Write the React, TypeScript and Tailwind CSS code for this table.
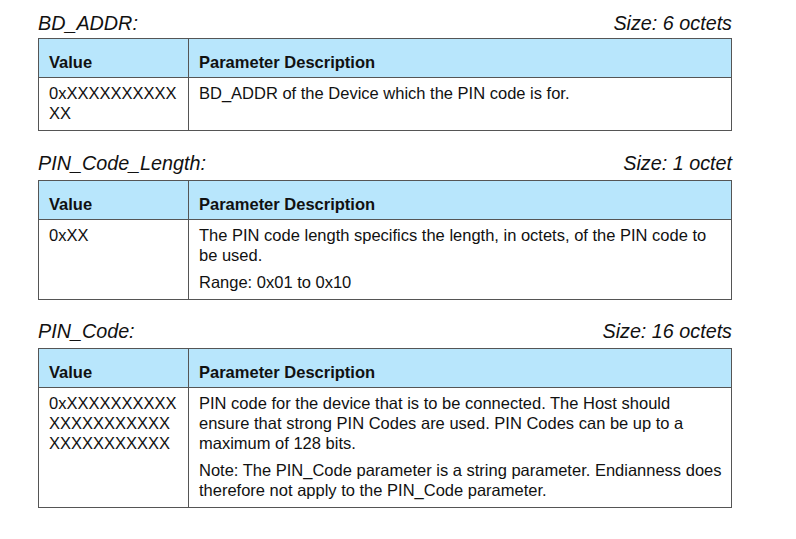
import React from "react";

const font = { fontFamily: '"Liberation Sans", Arial, sans-serif' };

function Section({
  name,
  size,
  value,
  desc,
  titleClass,
}: {
  name: string;
  size: string;
  value: string[];
  desc: string[][];
  titleClass: string;
}) {
  return (
    <div>
      <div className={`flex justify-between items-end italic text-[19.75px] leading-[24px] text-[#111] ${titleClass}`}>
        <span>{name}</span>
        <span>{size}</span>
      </div>
      <div className="border border-[#555] text-[16.5px] leading-[20px] text-[#111]">
        <div className="flex h-[39px] bg-[#b8e6fc] border-b border-[#555] font-bold">
          <div className="w-[150px] shrink-0 border-r border-[#555] pl-[10px] pt-[13px]">Value</div>
          <div className="flex-1 pl-[10px] pt-[13px]">Parameter Description</div>
        </div>
        <div className="flex">
          <div className="w-[150px] shrink-0 border-r border-[#555] pl-[10px] pt-[5px] pb-[7px]">
            {value.map((v, i) => (
              <div key={i}>{v}</div>
            ))}
          </div>
          <div className="flex-1 pl-[10px] pr-[6px] pt-[5px] pb-[7px] flex flex-col gap-[7px]">
            {desc.map((p, i) => (
              <div key={i}>
                {p.map((l, j) => (
                  <div key={j} className="whitespace-nowrap">{l}</div>
                ))}
              </div>
            ))}
          </div>
        </div>
      </div>
    </div>
  );
}

export default function App() {
  return (
    <div className="w-[796px] h-[539px] bg-white" style={font}>
      <div className="ml-[38px] w-[694px] pt-[5px] flex flex-col">
        <Section
          name="BD_ADDR:"
          size="Size: 6 octets"
          titleClass="h-[33px] pb-[3px]"
          value={["0xXXXXXXXXXX", "XX"]}
          desc={[["BD_ADDR of the Device which the PIN code is for."]]}
        />
        <Section
          name="PIN_Code_Length:"
          size="Size: 1 octet"
          titleClass="h-[49px] pb-[5px]"
          value={["0xXX"]}
          desc={[
            ["The PIN code length specifics the length, in octets, of the PIN code to", "be used."],
            ["Range: 0x01 to 0x10"],
          ]}
        />
        <Section
          name="PIN_Code:"
          size="Size: 16 octets"
          titleClass="h-[48px] pb-[5px]"
          value={["0xXXXXXXXXXX", "XXXXXXXXXXX", "XXXXXXXXXXX"]}
          desc={[
            [
              "PIN code for the device that is to be connected. The Host should",
              "ensure that strong PIN Codes are used. PIN Codes can be up to a",
              "maximum of 128 bits.",
            ],
            [
              "Note: The PIN_Code parameter is a string parameter. Endianness does",
              "therefore not apply to the PIN_Code parameter.",
            ],
          ]}
        />
      </div>
    </div>
  );
}
